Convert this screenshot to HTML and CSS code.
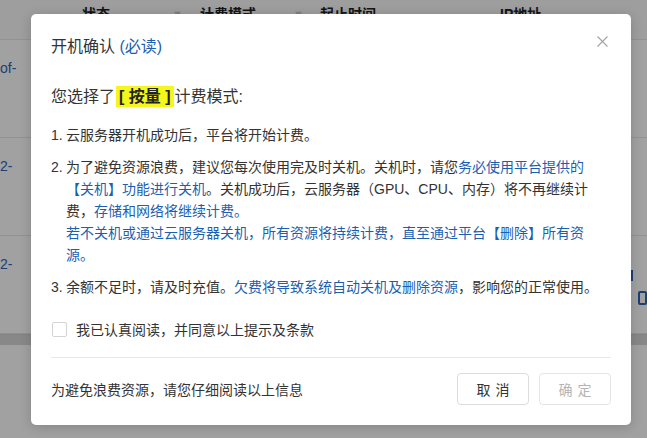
FILE: index.html
```html
<!DOCTYPE html>
<html lang="zh-CN">
<head>
    <meta charset="UTF-8">
    <meta name="viewport" content="width=device-width, initial-scale=1.0">
    <title>开机确认</title>
    <link rel="stylesheet" href="styles.css">
</head>
<body>

    <div class="page">
        <div class="list-table">
            <div class="thead">
                <span></span>
                <span class="th">状态</span>
                <span class="sort">▼</span>
                <span class="th">计费模式</span>
                <span class="sort">▼</span>
                <span class="th">起止时间</span>
                <span class="th">IP地址</span>
            </div>
            <div class="row">
                <span class="cut">of-</span>
            </div>
            <div class="row">
                <span class="cut">2-</span>
            </div>
            <div class="row">
                <span class="cut">2-</span>
                <div class="ops">
                    <span class="op-bar"></span>
                    <span class="op-copy"></span>
                </div>
            </div>
            <div class="scrollbar"></div>
        </div>

        <div class="mask"></div>

        <div class="modal">
            <div class="modal-head">
                <h3 class="modal-title">开机确认 <span class="link">(必读)</span></h3>
                <button class="close" aria-label="关闭">
                    <svg width="11" height="11" viewBox="0 0 11 11">
                        <path d="M0.5 0.5 L10.5 10.5 M10.5 0.5 L0.5 10.5" stroke="#a3a3a3" stroke-width="1.1" fill="none"/>
                    </svg>
                </button>
            </div>

            <div class="modal-body">
                <p class="lead">您选择了<b class="mark">[ 按量 ]</b>计费模式:</p>

                <ol class="terms">
                    <li>
                        <span class="num">1.</span>
                        <div>云服务器开机成功后，平台将开始计费。</div>
                    </li>
                    <li>
                        <span class="num">2.</span>
                        <div>
                            为了避免资源浪费，建议您每次使用完及时关机。关机时，请您<span class="link">务必使用平台提供的【关机】功能进行关机</span>。关机成功后，云服务器（GPU、CPU、内存）将不再继续计费，<span class="link">存储和网络将继续计费。</span>
                            <span class="link block">若不关机或通过云服务器关机，所有资源将持续计费，直至通过平台【删除】所有资源。</span>
                        </div>
                    </li>
                    <li>
                        <span class="num">3.</span>
                        <div>余额不足时，请及时充值。<span class="link">欠费将导致系统自动关机及删除资源</span>，影响您的正常使用。</div>
                    </li>
                </ol>

                <label class="agree">
                    <span class="box"></span>
                    我已认真阅读，并同意以上提示及条款
                </label>
            </div>

            <div class="modal-foot">
                <span class="hint">为避免浪费资源，请您仔细阅读以上信息</span>
                <div class="btns">
                    <button class="btn">取消</button>
                    <button class="btn" disabled>确定</button>
                </div>
            </div>
        </div>
    </div>

</body>
</html>
```

FILE: styles.css
```css
*{
    margin: 0;
    padding: 0;
    box-sizing: border-box;
}
html{
    font: 14px "Liberation Sans", "Noto Sans CJK SC", sans-serif;
    text-spacing-trim: space-all;
}
body{
    width: 647px;
    height: 438px;
    overflow: hidden;
    background: #fff;
    color: #333;
}
button{
    font: inherit;
    background: none;
    border: none;
    cursor: pointer;
}
ol{
    list-style: none;
}
.page{
    position: relative;
    height: 100%;
}

/* table behind the dialog */
.thead{
    height: 40px;
    display: grid;
    grid-template-columns: 82px 90px 28px 93px 27px 180px auto;
    padding-top: 4px;
    line-height: 20px;
    background: #fafafa;
    border-bottom: 1px solid #e8e8e8;
}
.th{
    font-weight: bold;
    color: #222;
}
.sort{
    color: #c8c8c8;
    font-size: 11px;
}
.row{
    height: 98px;
    padding-top: 18px;
    line-height: 20px;
    border-bottom: 1px solid #e8e8e8;
    display: flex;
    justify-content: space-between;
}
.row:first-of-type{
    height: 95px;
}
.cut{
    color: #2a66b8;
}
.ops{
    display: flex;
    flex-direction: column;
    align-items: flex-end;
    gap: 10px;
    padding-top: 16px;
}
.op-bar{
    width: 3px;
    height: 11px;
    margin-right: 14px;
    background: #2a66b8;
}
.op-copy{
    width: 9px;
    height: 14px;
    border: 2px solid #2a66b8;
    border-radius: 2px;
}
.scrollbar{
    height: 11px;
    background: #d8d8d8;
    border-top: 1px solid #cfcfcf;
}
.mask{
    position: absolute;
    inset: 0;
    background: rgba(0, 0, 0, .37);
}

/* dialog */
.modal{
    position: absolute;
    top: 14px;
    left: 31px;
    width: 600px;
    background: #fff;
    border-radius: 5px;
    box-shadow: 0 2px 12px rgba(0, 0, 0, .18);
    padding: 21px 20px 20px;
}
.modal-head{
    display: flex;
    justify-content: space-between;
    align-items: flex-start;
}
.modal-title{
    font-size: 16px;
    font-weight: normal;
    line-height: 24px;
}
.link{
    color: #1c5fb0;
}
.block{
    display: block;
}
.close{
    width: 11px;
    height: 11px;
    margin: 1px 3px 0 0;
    display: flex;
}
.lead{
    margin-top: 26px;
    font-size: 16px;
    line-height: 24px;
}
.mark{
    background: #f6f61c;
    padding: 2px 3px;
    margin: 0 1px;
    color: #222;
}
.terms{
    margin-top: 15px;
    display: flex;
    flex-direction: column;
    gap: 10px;
    line-height: 22px;
}
.terms > li{
    display: grid;
    grid-template-columns: 15px 1fr;
    padding-right: 5px;
}
.agree{
    margin-top: 20px;
    display: flex;
    align-items: center;
    gap: 9px;
    height: 22px;
    cursor: pointer;
}
.box{
    width: 15px;
    height: 15px;
    border: 1px solid #d4d4d4;
    border-radius: 2px;
    margin-left: 1px;
}
.modal-foot{
    margin-top: 17px;
    padding-top: 15px;
    border-top: 1px solid #e8e8e8;
    display: flex;
    justify-content: space-between;
    align-items: center;
}
.btns{
    display: flex;
    gap: 10px;
}
.btn{
    width: 72px;
    height: 32px;
    border: 1px solid #dcdcdc;
    border-radius: 4px;
    color: #333;
    letter-spacing: 5px;
    text-indent: 5px;
}
.btn:disabled{
    color: #b4b4b4;
    border-color: #e4e4e4;
    cursor: not-allowed;
}
```
